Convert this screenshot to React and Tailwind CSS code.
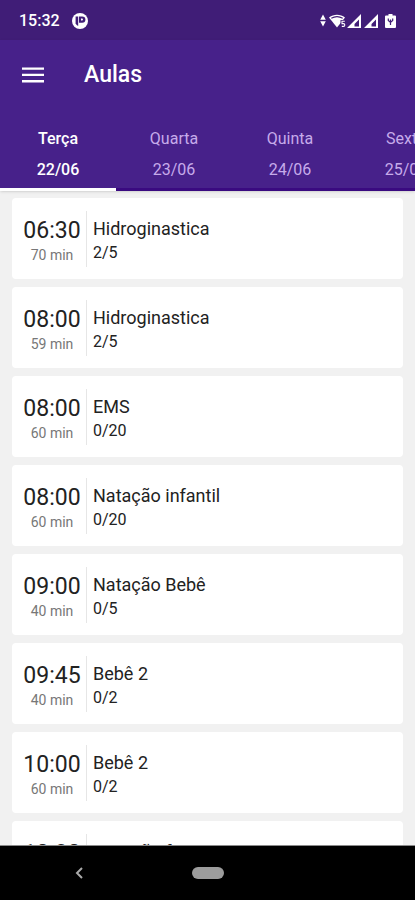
import React, { useState } from "react"

const days = [
    { name: "Terça", date: "22/06" },
    { name: "Quarta", date: "23/06" },
    { name: "Quinta", date: "24/06" },
    { name: "Sexta", date: "25/06" },
]

const classes = [
    { time: "06:30", duration: "70 min", name: "Hidroginastica", spots: "2/5" },
    { time: "08:00", duration: "59 min", name: "Hidroginastica", spots: "2/5" },
    { time: "08:00", duration: "60 min", name: "EMS", spots: "0/20" },
    { time: "08:00", duration: "60 min", name: "Natação infantil", spots: "0/20" },
    { time: "09:00", duration: "40 min", name: "Natação Bebê", spots: "0/5" },
    { time: "09:45", duration: "40 min", name: "Bebê 2", spots: "0/2" },
    { time: "10:00", duration: "60 min", name: "Bebê 2", spots: "0/2" },
    { time: "10:30", duration: "60 min", name: "Natação fun", spots: "0/5" },
]

function StatusBar(){
    return(
    <div className="flex h-10 shrink-0 items-center justify-between bg-[#401d77] pt-0.5 pr-[18px] pl-[19px] text-white">
        <div className="flex items-center gap-3">
            <span className="text-base font-medium">15:32</span>
            <svg className="size-4" viewBox="0 0 16 16">
                <circle cx="8" cy="8" r="8" fill="#fff" />
                <path d="M3.6 3.4h2.600v9.600a6 6 0 0 1-2.600-2.400z" fill="#401d77" />
                <path d="M7 3.400h3.200a3.200 3.200 0 0 1 0 6.400H7z" fill="#401d77" />
                <path d="M9 5.600h1a1 1 0 0 1 0 2H9z" fill="#fff" />
            </svg>
        </div>
        <svg className="h-4 w-[77px]" viewBox="0 0 77 16" fill="#fff">
            <path d="M3 1.500l2.800 5.300H.2zM3 13.500L.2 8.200h5.600z" />
            <path d="M9 4.600C13.500.9 20.500.9 25 4.600L17 14.500z" />
            <path d="M11.300 5.300C15 3.200 19 3.200 22.700 5.300" fill="none" stroke="#401d77" strokeWidth="1.200" />
            <path d="M20.500 7H26v8h-5.500z" fill="#401d77" />
            <path d="M24.800 8.300H22v2.300h1.400a1.300 1.300 0 0 1 0 2.800h-1.600" fill="none" stroke="#fff" strokeWidth="1.100" />
            <path fillRule="evenodd" d="M41 1v14H27zM39 6.500v7h-4.500V11z" />
            <path fillRule="evenodd" d="M58 1v14H44zM56 6.500v7h-4.500V11z" />
            <path d="M66 2.500h2.500V1h4v1.500H75a1 1 0 0 1 1 1V14a1 1 0 0 1-1 1h-9a1 1 0 0 1-1-1V3.500a1 1 0 0 1 1-1z" />
            <path d="M68.300 5.500v2l2.200 2 2.200-2v-2M70.500 6.500v5.500" fill="none" stroke="#401d77" strokeWidth="1.200" />
        </svg>
    </div>
    )
}

function ClassCard({ item }){
    return(
    <li className="flex h-[81px] shrink-0 items-center rounded-sm bg-white pl-2.5">
        <div className="flex w-[60px] flex-col items-center pt-1">
            <span className="text-[23px] leading-7 text-[#222]">{item.time}</span>
            <span className="text-sm leading-5 text-[#777]">{item.duration}</span>
        </div>
        <div className="ml-1 h-14 w-px bg-[#e6e6e6]" />
        <div className="ml-1.5 flex flex-col pt-1">
            <span className="text-lg leading-6 text-[#222]">{item.name}</span>
            <span className="text-base leading-6 text-[#222]">{item.spots}</span>
        </div>
    </li>
    )
}

function App(){

    const [selected, setSelected] = useState(0)

    return(
    <div className="flex h-screen flex-col overflow-hidden bg-[#f1f1f1] font-[Roboto,sans-serif]">
        <StatusBar />
        <header className="shrink-0 bg-[#47218a] shadow-sm">
            <div className="flex h-[70px] items-center pl-[22px]">
                <button aria-label="Menu" className="text-white">
                    <svg className="h-4 w-[22px]" viewBox="0 0 22 16" fill="currentColor">
                        <path d="M0 .5h22v2.300H0zM0 6.800h22v2.300H0zM0 13.100h22v2.300H0z" />
                    </svg>
                </button>
                <h1 className="ml-10 text-[23px] font-medium text-white">Aulas</h1>
            </div>
            <nav className="flex h-[81px] overflow-hidden">
                {days.map((day, i) => (
                    <button
                        key={day.date}
                        onClick={() => setSelected(i)}
                        className={`${
                        i === selected ? "border-white font-medium text-white" : "border-[#3a0a80] text-[#c6abea]"
                        } flex w-29 shrink-0 grow flex-col items-center border-b-[3px] pt-[13px] text-base`}
                    >
                        <span className="leading-[31px]">{day.name}</span>
                        <span className="leading-[31px]">{day.date}</span>
                    </button>
                ))}
            </nav>
        </header>
        <main className="min-h-0 flex-1 overflow-hidden px-3 pt-[7px]">
            <ul className="flex flex-col gap-2">
                {classes.map((item, i) => (
                    <ClassCard key={i} item={item} />
                ))}
            </ul>
        </main>
        <footer className="grid h-[55px] shrink-0 grid-cols-5 items-center border-t border-[#8a8a8a] bg-black">
            <button aria-label="Voltar" className="col-start-1 justify-self-end text-[#aaa]">
                <svg className="h-3 w-2" viewBox="0 0 8 12" fill="none" stroke="currentColor" strokeWidth="2">
                    <path d="M7 1L2 6l5 5" />
                </svg>
            </button>
            <button aria-label="Início" className="col-start-3 h-3 w-8 justify-self-center rounded-full bg-[#9c9c9c]" />
        </footer>
    </div>
    )
}

export default App
